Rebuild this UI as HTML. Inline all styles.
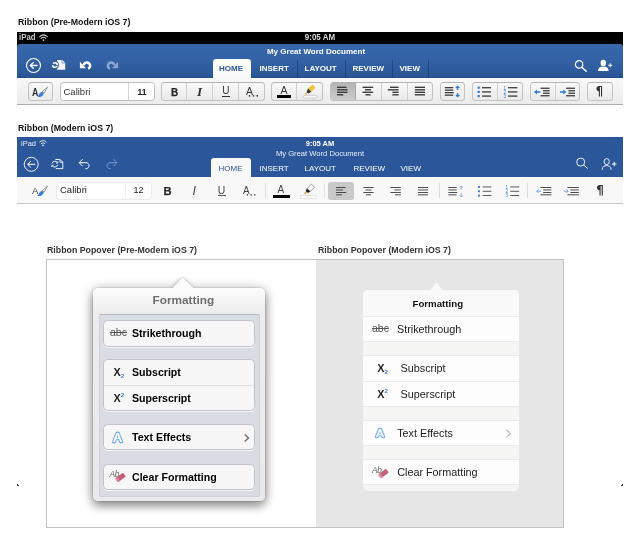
<!DOCTYPE html>
<html><head><meta charset="utf-8"><title>Ribbon</title>
<style>
html,body{margin:0;padding:0;background:#fff;}
body{width:640px;height:547px;position:relative;overflow:hidden;font-family:"Liberation Sans",sans-serif;color:#000;}
.abs{position:absolute;}
.t{position:absolute;white-space:nowrap;line-height:1;will-change:opacity;}
.h{font-weight:bold;font-size:8.8px;color:#111;}
svg{position:absolute;overflow:visible;}
/* ribbon 1 */
#r1status{left:17px;top:32px;width:606px;height:16px;background:#000;}
#r1blue{left:17px;top:44px;width:606px;height:34px;border-radius:3px 3px 0 0;background:linear-gradient(#3667aa,#3262a5 50%,#2a5595 96%,#23498a);}
#r1bar{left:17px;top:78px;width:606px;height:27px;background:linear-gradient(#f9f9f9,#ececec);border-bottom:1px solid #b0b0b0;box-sizing:border-box;}
.tab1{font-weight:bold;font-size:8px;color:#fff;top:64.5px;}
.btn1{position:absolute;top:82px;height:19px;box-sizing:border-box;border:1px solid #c4c4c4;border-top-color:#b4b4b4;border-radius:3.5px;background:linear-gradient(#f9f9f9,#eaeaea);}
.sep1{position:absolute;top:0;width:1px;height:17px;background:#cfcfcf;}
.d1{position:absolute;top:60px;width:1px;height:18px;background:rgba(20,50,110,.55);}
/* ribbon 2 */
#r2blue{left:17px;top:137px;width:606px;height:40px;background:#2b579a;}
#r2bar{left:17px;top:177px;width:606px;height:27px;background:#f8f8f8;border-bottom:1px solid #c8c8c8;box-sizing:border-box;}
.tab2{font-size:8px;color:#fff;top:164.5px;}
.sep2{position:absolute;top:182px;width:1px;height:18px;background:#dcdcdc;}
/* popovers */
#boxL{left:46px;top:259px;width:271px;height:269px;box-sizing:border-box;border:1px solid #c4c4c4;background:#fff;}
#boxR{left:316px;top:259px;width:248px;height:269px;box-sizing:border-box;border:1px solid #c4c4c4;border-left:none;background:#e6e6e6;}

/* popover 1 */
#p1{left:92.6px;top:288px;width:172.6px;height:212.5px;border-radius:5px;background:linear-gradient(#fcfcfc 0,#ececee 26px,#e9e9eb 100%);box-shadow:0 2px 12px rgba(0,0,0,.42),0 6px 10px rgba(0,0,0,.22),0 0 1.5px rgba(0,0,0,.3);z-index:1;}
#p1in{left:98.5px;top:313.6px;width:161.2px;height:183px;box-sizing:border-box;border-radius:2px;background:#d9dce3;border:1px solid #cdd0d6;border-top-color:#b6b9c1;}
.g1{position:absolute;left:103.2px;width:151.6px;box-sizing:border-box;border:1px solid #bfc2c9;border-radius:4.5px;background:#f7f7f7;box-shadow:0 1px 0 rgba(255,255,255,.7);}
.l1{font-weight:bold;font-size:10.6px;color:#000;left:132px;}
/* popover 2 */
#p2{left:362.5px;top:290.4px;width:156.8px;height:201px;border-radius:5px;background:#f5f5f4;overflow:hidden;}
.row2{position:absolute;left:0;width:157px;background:#fdfdfd;border-top:1px solid #eaeaee;border-bottom:1px solid #eaeaee;box-sizing:border-box;}
.l2{font-size:10.8px;color:#222;}
</style></head>
<body>
<div class="t h" style="left:18px;top:17.5px;">Ribbon (Pre-Modern iOS 7)</div>
<div class="abs" id="r1status"></div>
<div class="abs" id="r1blue"></div>
<div class="abs" id="r1bar"></div>


<!-- ribbon 1 content -->
<div class="t" style="left:19px;top:33.4px;font-size:9.3px;font-weight:bold;color:#c9c9c9;transform:scaleX(.85);transform-origin:0 0;">iPad</div>
<svg style="left:39px;top:33.5px;" width="9" height="8" viewBox="0 0 9 8"><g fill="none" stroke="#d0d0d0" stroke-width="1.1" stroke-linecap="round"><path d="M0.7 2.6 Q4.5 -0.9 8.3 2.6"/><path d="M2.2 4.3 Q4.5 2.2 6.8 4.3"/></g><circle cx="4.5" cy="6.1" r="0.9" fill="#d0d0d0"/></svg>
<div class="t" style="left:270px;width:100px;text-align:center;top:33.4px;font-size:9.3px;font-weight:bold;color:#d6d6d6;transform:scaleX(.86);">9:05 AM</div>
<div class="t" style="left:216px;width:200px;text-align:center;top:47.5px;font-size:8px;font-weight:bold;color:#fff;">My Great Word Document</div>
<!-- left icons -->
<svg style="left:25px;top:57px;" width="17" height="17" viewBox="0 0 17 17"><circle cx="8.5" cy="8.5" r="7" fill="none" stroke="#fff" stroke-width="1.1"/><path d="M12 8.5 H6 M8.2 5.8 L5.3 8.5 L8.2 11.2" fill="none" stroke="#fff" stroke-width="1.5" stroke-linejoin="round" stroke-linecap="round"/></svg>
<svg style="left:50px;top:58px;" width="16" height="13" viewBox="0 0 16 13"><path d="M7 2 H12.2 L15.2 5 V11.8 H7 Z" fill="#f4f6fa"/><path d="M12 1.8 V5.2 H15.4" fill="none" stroke="#7f9ccb" stroke-width="0.8"/><circle cx="5" cy="7" r="3.9" fill="#3160a3"/><circle cx="5" cy="7" r="2.35" fill="none" stroke="#fff" stroke-width="1.5" stroke-dasharray="5.9 1.48" stroke-dashoffset="-0.6"/></svg>
<svg style="left:79px;top:60px;" width="14" height="10" viewBox="0 0 14 10"><path d="M0.9 1.7 L0.9 8.3 L7 8.3 Z" fill="#fff"/><path d="M9.2 8.8 A3.3 3.3 0 1 0 4.6 5.2" fill="none" stroke="#fff" stroke-width="2.6"/></svg>
<svg style="left:105px;top:60px;" width="14" height="10" viewBox="0 0 14 10"><g transform="translate(14,0) scale(-1,1)"><path d="M0.9 1.7 L0.9 8.3 L7 8.3 Z" fill="#8ba6d1"/><path d="M9.2 8.8 A3.3 3.3 0 1 0 4.6 5.2" fill="none" stroke="#8ba6d1" stroke-width="2.6"/></g></svg>
<!-- tabs -->
<div class="abs" style="left:212.5px;top:59px;width:38.5px;height:20px;background:linear-gradient(#fff,#f8f8f8);border-radius:3px 3px 0 0;"></div>
<div class="t tab1" style="left:219px;color:#2b579a;">HOME</div>
<div class="t tab1" style="left:259.5px;">INSERT</div>
<div class="t tab1" style="left:304.5px;">LAYOUT</div>
<div class="t tab1" style="left:352.5px;">REVIEW</div>
<div class="t tab1" style="left:399.5px;">VIEW</div>
<div class="d1" style="left:296.5px;"></div><div class="d1" style="left:344.5px;"></div><div class="d1" style="left:392px;"></div><div class="d1" style="left:427.5px;"></div>
<!-- right icons -->
<svg style="left:574px;top:58.5px;" width="14" height="14" viewBox="0 0 14 14"><circle cx="5.1" cy="5.4" r="3.7" fill="none" stroke="#fff" stroke-width="1.2"/><path d="M7.9 8.2 L12.2 12.3" stroke="#fff" stroke-width="1.5" stroke-linecap="round"/></svg>
<svg style="left:597px;top:58.5px;" width="17" height="13" viewBox="0 0 17 13"><ellipse cx="6.3" cy="4" rx="2.7" ry="3.2" fill="#fff"/><path d="M1 12 C1 9 3 7.6 6.3 7.6 C9.6 7.6 11.6 9 11.6 12 Z" fill="#fff"/><path d="M11.2 6.3 H15.2 M13.2 4.3 V8.3" stroke="#fff" stroke-width="1"/></svg>
<!-- toolbar -->
<div class="btn1" style="left:28px;width:25px;"></div>
<div class="t" style="left:32.4px;top:86.5px;font-size:10.5px;font-weight:bold;color:#333;transform:scaleX(.84);transform-origin:0 0;">A</div>
<svg style="left:36.4px;top:85.8px;" width="13" height="12" viewBox="0 0 13 12"><path d="M6.2 5.7 L11.5 1.1 L8.1 7.3 Z" fill="#f2f2f2" stroke="#6a6a6a" stroke-width="0.65" stroke-linejoin="round"/><path d="M1 11 C2.2 10.4 2.6 8.6 3.8 7.2 C5 5.8 6.6 5.6 7.4 6.6 C8.2 7.8 7.2 9.6 5.6 10.4 C4 11.2 2.4 11.2 1 11 Z" fill="#3a80d6"/></svg>
<div class="btn1" style="left:60px;width:94.5px;background:#fff;border-color:#bcbcbc;"><div class="sep1" style="left:67.3px;background:#d4d4d4;"></div></div>
<div class="t" style="left:63.5px;top:86.5px;font-size:9.5px;color:#333;">Calibri</div>
<div class="t" style="left:137.5px;top:87.8px;font-size:8.6px;font-weight:bold;color:#222;">11</div>
<div class="btn1" style="left:161px;width:104px;"><div class="sep1" style="left:24px;"></div><div class="sep1" style="left:50.2px;"></div><div class="sep1" style="left:76.2px;"></div></div>
<div class="t" style="left:170.5px;top:86.5px;font-size:11px;font-weight:bold;color:#2a2a2a;-webkit-text-stroke:0.25px #2a2a2a;transform:scaleX(.9);transform-origin:0 0;">B</div>
<div class="t" style="left:197px;top:84.9px;font-size:13.3px;font-style:italic;font-weight:bold;font-family:'Liberation Serif',serif;color:#333;">I</div>
<div class="t" style="left:222.3px;top:85.9px;font-size:10px;color:#333;">U</div>
<div class="abs" style="left:222px;top:95.6px;width:8px;height:1px;background:#333;"></div>
<div class="t" style="left:246.1px;top:86px;font-size:10.5px;color:#333;">A</div>
<svg style="left:248px;top:95.2px;" width="12" height="2" viewBox="0 0 12 2"><g fill="#333"><rect x="0.8" y="0.1" width="1.5" height="1.5"/><rect x="4.8" y="0.1" width="1.5" height="1.5"/><rect x="8.5" y="0.1" width="1.5" height="1.5"/></g></svg>
<div class="btn1" style="left:271px;width:51.5px;"><div class="sep1" style="left:24px;"></div></div>
<div class="t" style="left:280.5px;top:84.5px;font-size:10.5px;color:#333;">A</div>
<div class="abs" style="left:277px;top:95px;width:13.5px;height:3px;background:#000;"></div>
<svg style="left:303px;top:84px;" width="14" height="15" viewBox="0 0 14 15"><path d="M9.6 1.3 L12 3.5 L8.3 7.6 L5.2 4.6 Z" fill="#eec33c" stroke="#eec33c" stroke-width="1" stroke-linejoin="round"/><path d="M5 4.6 L8.2 7.8 L5.6 9.5 L3.6 8.2 Z" fill="#333"/><circle cx="2.9" cy="9.8" r="1.05" fill="#e6b730"/><rect x="0.5" y="11.4" width="13.2" height="2.8" rx="0.8" fill="#f6f6f6" stroke="#c6c6c6" stroke-width="0.8"/></svg>
<div class="btn1" style="left:329.5px;width:103px;"><div class="abs" style="left:0;top:0;width:25px;height:17px;border-radius:2px 0 0 2px;background:linear-gradient(#b5b5b5,#cbcbcb);"></div><div class="sep1" style="left:24.5px;background:#a9a9a9"></div><div class="sep1" style="left:50.5px;"></div><div class="sep1" style="left:76px;"></div></div>
<svg style="left:337px;top:86px;" width="100" height="11" viewBox="0 0 100 11"><g fill="#3c3c3c"><rect x="0" y="0.6" width="9.5" height="1.4"/><rect x="0" y="3.1" width="10.5" height="1.4"/><rect x="0" y="5.6" width="10.5" height="1.4"/><rect x="0" y="8.1" width="6.3" height="1.4"/>
<rect x="25.6" y="0.6" width="10.6" height="1.4"/><rect x="28" y="3.1" width="6" height="1.4"/><rect x="25.6" y="5.6" width="10.6" height="1.4"/><rect x="28.4" y="8.1" width="5.2" height="1.4"/>
<rect x="53" y="0.6" width="8.6" height="1.4"/><rect x="50.8" y="3.1" width="10.8" height="1.4"/><rect x="55.4" y="5.6" width="6.2" height="1.4"/><rect x="55.4" y="8.1" width="6.2" height="1.4"/>
<rect x="77.8" y="0.6" width="10.2" height="1.4"/><rect x="77.8" y="3.1" width="10.2" height="1.4"/><rect x="77.8" y="5.6" width="10.2" height="1.4"/><rect x="77.8" y="8.1" width="10.2" height="1.4"/></g></svg>
<div class="btn1" style="left:439.5px;width:25px;"></div>
<svg style="left:444px;top:85px;" width="17" height="13" viewBox="0 0 17 13"><g fill="#3c3c3c"><rect x="0.8" y="2" width="8.4" height="1.3"/><rect x="0.8" y="4.5" width="8.4" height="1.3"/><rect x="0.8" y="7" width="9" height="1.3"/><rect x="0.8" y="9.5" width="8.4" height="1.3"/></g><g fill="#2f7bd3"><path d="M13.6 0.4 L16 3 H14.4 V4.8 H12.8 V3 H11.2 Z"/><path d="M13.6 12.6 L16 10 H14.4 V8.2 H12.8 V10 H11.2 Z"/></g></svg>
<div class="btn1" style="left:471.5px;width:51px;"><div class="sep1" style="left:24px;"></div></div>
<svg style="left:477px;top:86px;" width="42" height="12" viewBox="0 0 42 12"><g fill="#2f7bd3"><rect x="0.6" y="0.6" width="2.2" height="2.2" rx="0.5"/><rect x="0.6" y="4.8" width="2.2" height="2.2" rx="0.5"/><rect x="0.6" y="9" width="2.2" height="2.2" rx="0.5"/></g><g fill="#4a4a4a"><rect x="5" y="1" width="9" height="1.4"/><rect x="5" y="5.2" width="9" height="1.4"/><rect x="5" y="9.4" width="9" height="1.4"/><rect x="31" y="1" width="9.4" height="1.4"/><rect x="31" y="5.2" width="9.4" height="1.4"/><rect x="31" y="9.4" width="9.4" height="1.4"/></g><g fill="#2f7bd3" font-family="Liberation Sans, sans-serif" font-size="4.6"><text x="26.4" y="3.6">1</text><text x="26.4" y="7.8">2</text><text x="26.4" y="12">3</text></g></svg>
<div class="btn1" style="left:529.5px;width:50.5px;"><div class="sep1" style="left:24px;"></div></div>
<svg style="left:533px;top:87.3px;" width="44" height="12" viewBox="0 0 44 12"><g fill="#3c3c3c"><rect x="7.6" y="0.6" width="9" height="1.3"/><rect x="10" y="3.1" width="6.6" height="1.3"/><rect x="10" y="5.6" width="6.6" height="1.3"/><rect x="7.6" y="8.1" width="9" height="1.3"/>
<rect x="33" y="0.6" width="9" height="1.3"/><rect x="35.4" y="3.1" width="6.6" height="1.3"/><rect x="35.4" y="5.6" width="6.6" height="1.3"/><rect x="33" y="8.1" width="9" height="1.3"/></g><g fill="#2f7bd3"><path d="M1 5 L4 2.4 V4.2 H7.4 V5.8 H4 V7.6 Z"/><path d="M33.4 5 L30.4 2.4 V4.2 H27 V5.8 H30.4 V7.6 Z"/></g></svg>
<div class="btn1" style="left:587px;width:25.5px;"></div>
<div class="t" style="left:595.8px;top:85.6px;font-size:11.5px;font-weight:bold;color:#333;font-family:'DejaVu Sans',sans-serif;">¶</div>

<div class="t h" style="left:18px;top:123.5px;">Ribbon (Modern iOS 7)</div>
<div class="abs" id="r2blue"></div>
<div class="abs" id="r2bar"></div>


<!-- ribbon 2 content -->
<div class="t" style="left:21px;top:139.8px;font-size:7.5px;color:#e8eef7;">iPad</div>
<svg style="left:38.5px;top:140px;" width="8" height="7" viewBox="0 0 8 7"><g fill="none" stroke="#e8eef7" stroke-width="0.9"><path d="M0.5 2.2 Q4 -0.9 7.5 2.2"/><path d="M1.9 3.7 Q4 1.9 6.1 3.7"/></g><path d="M4 6.4 L2.9 5 Q4 4.1 5.1 5 Z" fill="#e8eef7"/></svg>
<div class="t" style="left:270px;width:100px;text-align:center;top:140px;font-size:7.5px;font-weight:bold;color:#fff;">9:05 AM</div>
<div class="t" style="left:220px;width:200px;text-align:center;top:149.5px;font-size:7.6px;color:#e9eef6;">My Great Word Document</div>
<svg style="left:23px;top:156px;" width="17" height="17" viewBox="0 0 17 17"><circle cx="8.2" cy="8.3" r="7" fill="none" stroke="#fff" stroke-width="0.9"/><path d="M12.2 8.3 H4.8 M7.8 5.2 L4.6 8.3 L7.8 11.4" fill="none" stroke="#fff" stroke-width="1"/></svg>
<svg style="left:50px;top:158px;" width="14" height="12" viewBox="0 0 14 12"><path d="M5.4 1.5 H10 L12.8 4.3 V10.6 H5.8" fill="none" stroke="#fff" stroke-width="0.9"/><path d="M10 1.5 V4.3 H12.8" fill="none" stroke="#fff" stroke-width="0.8"/><path d="M7.4 4.6 A3 3 0 0 0 2 5.4 M2.2 7.6 A3 3 0 0 0 7.6 6.8" fill="none" stroke="#fff" stroke-width="0.9"/><path d="M7.8 3.2 V5 H6" fill="none" stroke="#fff" stroke-width="0.8"/><path d="M1.8 9 V7.2 H3.6" fill="none" stroke="#fff" stroke-width="0.8"/></svg>
<svg style="left:78px;top:158px;" width="13" height="12" viewBox="0 0 13 12"><path d="M4.6 1.2 L1.2 4.7 L4.6 8.2 M1.2 4.7 H8 C12 4.7 12.4 10.6 7.4 10.8" fill="none" stroke="#fff" stroke-width="0.95"/></svg>
<svg style="left:105px;top:158px;" width="13" height="12" viewBox="0 0 13 12"><g transform="translate(13,0) scale(-1,1)"><path d="M4.6 1.2 L1.2 4.7 L4.6 8.2 M1.2 4.7 H8 C12 4.7 12.4 10.6 7.4 10.8" fill="none" stroke="#7d9bcb" stroke-width="0.95"/></g></svg>
<div class="abs" style="left:211px;top:158px;width:40px;height:20px;background:#f8f8f8;border-radius:3px 3px 0 0;"></div>
<div class="t tab2" style="left:218.5px;color:#2b579a;">HOME</div>
<div class="t tab2" style="left:259.5px;">INSERT</div>
<div class="t tab2" style="left:304.5px;">LAYOUT</div>
<div class="t tab2" style="left:353.5px;">REVIEW</div>
<div class="t tab2" style="left:400.5px;">VIEW</div>
<svg style="left:575px;top:156.4px;" width="14" height="14" viewBox="0 0 14 14"><circle cx="5.7" cy="6.1" r="4" fill="none" stroke="#fff" stroke-width="0.9"/><path d="M8.6 9 L12.8 12.6" stroke="#fff" stroke-width="0.9"/></svg>
<svg style="left:601px;top:157px;" width="17" height="14" viewBox="0 0 17 14"><ellipse cx="5.7" cy="4.6" rx="2.6" ry="3" fill="none" stroke="#fff" stroke-width="0.9"/><path d="M1.3 12.8 C1.3 9.6 3.2 8.6 5.7 8.6 C8.2 8.6 10.1 9.6 10.1 12.8" fill="none" stroke="#fff" stroke-width="0.9"/><path d="M11 7 H15.4 M13.2 4.8 V9.2" stroke="#fff" stroke-width="1"/></svg>
<!-- toolbar 2 -->
<div class="t" style="left:32px;top:185.5px;font-size:9.5px;color:#444;">A</div>
<svg style="left:35.7px;top:184.7px;" width="13" height="12" viewBox="0 0 13 12"><path d="M6.2 5.7 L11.5 1.1 L8.1 7.3 Z" fill="#f2f2f2" stroke="#6a6a6a" stroke-width="0.65" stroke-linejoin="round"/><path d="M1 11 C2.2 10.4 2.6 8.6 3.8 7.2 C5 5.8 6.6 5.6 7.4 6.6 C8.2 7.8 7.2 9.6 5.6 10.4 C4 11.2 2.4 11.2 1 11 Z" fill="#3a80d6"/></svg>
<div class="abs" style="left:55.5px;top:181.5px;width:96px;height:18px;box-sizing:border-box;border:1px solid #ececec;border-radius:3px;background:#fff;"></div>
<div class="abs" style="left:124.5px;top:183px;width:1px;height:15px;background:#f0f0f0;"></div>
<div class="t" style="left:60px;top:185px;font-size:9.5px;color:#222;">Calibri</div>
<div class="t" style="left:133.5px;top:185.5px;font-size:9px;color:#222;">12</div>
<div class="t" style="left:163.4px;top:185.6px;font-size:11.2px;font-weight:bold;color:#2a2a2a;-webkit-text-stroke:0.25px #2a2a2a;">B</div>
<div class="t" style="left:192.6px;top:184.9px;font-size:12.5px;font-style:italic;color:#444;">I</div>
<div class="t" style="left:217.8px;top:186.3px;font-size:10.4px;color:#444;">U</div>
<div class="abs" style="left:217.6px;top:194.8px;width:8.2px;height:1px;background:#555;"></div>
<div class="t" style="left:243.2px;top:185.3px;font-size:11.3px;color:#444;transform:scaleX(.88);transform-origin:0 0;">A</div>
<svg style="left:246px;top:194px;" width="13" height="2" viewBox="0 0 13 2"><g fill="#3a3a3a"><rect x="0.75" y="0.15" width="1.3" height="1.4"/><rect x="4.45" y="0.15" width="1.3" height="1.4"/><rect x="8.15" y="0.15" width="1.3" height="1.4"/></g></svg>
<div class="sep2" style="left:265px;top:183px;height:15px;"></div>
<div class="t" style="left:277.5px;top:184.5px;font-size:10px;color:#444;">A</div>
<div class="abs" style="left:273px;top:195px;width:17px;height:3px;background:#000;"></div>
<svg style="left:300px;top:183px;" width="18" height="16" viewBox="0 0 18 16"><path d="M11.5 1.2 L14.5 4.2 L10.4 8.3 L7 5.6 Z" fill="#fff" stroke="#6a6a6a" stroke-width="0.7" stroke-linejoin="round"/><path d="M6.8 5.5 L10.3 8.4 L8.4 9.8 L6.2 9.2 L5.9 7.6 Z" fill="#222"/><path d="M4 10.8 L5.6 8.8 L6.6 10 Z" fill="#f0a23c" stroke="#f0a23c" stroke-width="0.6" stroke-linejoin="round"/><rect x="0.6" y="12.4" width="16" height="2.8" fill="#fdfdfd" stroke="#dadada" stroke-width="0.7"/></svg>
<div class="sep2" style="left:324px;top:183px;height:15px;background:#e6e6e6"></div>
<div class="abs" style="left:328px;top:181.5px;width:26px;height:18.5px;border-radius:3px;background:#c9c9c9;"></div>
<svg style="left:336px;top:186px;" width="100" height="11" viewBox="0 0 100 11"><g fill="#3a3a3a"><rect x="0" y="1" width="9.6" height="0.9"/><rect x="0" y="3.5" width="7" height="0.9"/><rect x="0" y="6" width="10.2" height="0.9"/><rect x="0" y="8.4" width="6" height="0.9"/>
<rect x="27.4" y="1" width="10.2" height="0.9"/><rect x="29.4" y="3.5" width="6.2" height="0.9"/><rect x="27.4" y="6" width="10.2" height="0.9"/><rect x="30" y="8.4" width="5" height="0.9"/>
<rect x="54.4" y="1" width="10.4" height="0.9"/><rect x="58.4" y="3.5" width="6.4" height="0.9"/><rect x="54.4" y="6" width="10.4" height="0.9"/><rect x="59" y="8.4" width="5.8" height="0.9"/>
<rect x="82" y="1" width="10" height="0.9"/><rect x="82" y="3.5" width="10" height="0.9"/><rect x="82" y="6" width="10" height="0.9"/><rect x="82" y="8.4" width="10" height="0.9"/></g></svg>
<div class="sep2" style="left:439px;top:183px;height:15px;"></div>
<svg style="left:448px;top:185px;" width="17" height="13" viewBox="0 0 17 13"><g fill="#3a3a3a"><rect x="0.4" y="2" width="8.2" height="0.9"/><rect x="0.4" y="4.5" width="8.2" height="0.9"/><rect x="0.4" y="7" width="8.8" height="0.9"/><rect x="0.4" y="9.4" width="8.2" height="0.9"/></g><g fill="none" stroke="#7aa5de" stroke-width="0.8"><path d="M13.2 5 V1 M11.4 2.8 L13.2 1 L15 2.8"/><path d="M13.2 8 V12 M11.4 10.2 L13.2 12 L15 10.2"/></g></svg>
<svg style="left:477px;top:185px;" width="44" height="12" viewBox="0 0 44 12"><g fill="#2f7bd3"><rect x="1" y="1" width="1.9" height="1.9"/><rect x="1" y="5.3" width="1.9" height="1.9"/><rect x="1" y="9.6" width="1.9" height="1.9"/></g><g fill="#4a4a4a"><rect x="5.6" y="1.5" width="8.8" height="0.9"/><rect x="5.6" y="5.8" width="8.8" height="0.9"/><rect x="5.6" y="10.1" width="8.8" height="0.9"/><rect x="33.2" y="1.5" width="9" height="0.9"/><rect x="33.2" y="5.8" width="9" height="0.9"/><rect x="33.2" y="10.1" width="9" height="0.9"/></g><g fill="#4a8ade" font-family="Liberation Sans, sans-serif" font-size="4.6"><text x="28.4" y="3.8">1</text><text x="28.4" y="8">2</text><text x="28.4" y="12.2">3</text></g></svg>
<div class="sep2" style="left:527px;top:183px;height:15px;"></div>
<svg style="left:536px;top:186px;" width="44" height="11" viewBox="0 0 44 11"><g fill="#3a3a3a"><rect x="4.4" y="1" width="11" height="0.9"/><rect x="7.2" y="3.5" width="8.2" height="0.9"/><rect x="7.2" y="6" width="8.2" height="0.9"/><rect x="4.4" y="8.4" width="11" height="0.9"/>
<rect x="31.4" y="1" width="11.4" height="0.9"/><rect x="34.4" y="3.5" width="8.4" height="0.9"/><rect x="34.4" y="6" width="8.4" height="0.9"/><rect x="31.4" y="8.4" width="11.4" height="0.9"/></g><g fill="none" stroke="#5b93df" stroke-width="0.8"><path d="M0.8 5.2 H5.2 M2.6 3.4 L0.8 5.2 L2.6 7"/><path d="M32.2 5.2 H27.8 M30.4 3.4 L32.2 5.2 L30.4 7"/></g></svg>
<div class="t" style="left:596.3px;top:184.3px;font-size:12px;font-weight:bold;color:#333;font-family:'DejaVu Sans',sans-serif;">¶</div>

<div class="t h" style="left:47px;top:246px;font-size:8.8px;color:#333;">Ribbon Popover (Pre-Modern iOS 7)</div>
<div class="t h" style="left:318px;top:246px;font-size:8.8px;color:#333;">Ribbon Popover (Modern iOS 7)</div>
<div class="abs" id="boxL"></div>
<div class="abs" id="boxR"></div>

<!-- popover 1 -->
<svg style="left:170px;top:276px;z-index:0;" width="26" height="13" viewBox="0 0 26 13"><defs><filter id="sh" x="-50%" y="-50%" width="200%" height="200%"><feGaussianBlur stdDeviation="2.2"/></filter></defs><path d="M2.5 12 L12.5 2 L22.5 12 Z" fill="rgba(0,0,0,.35)" filter="url(#sh)"/></svg>
<div class="abs" id="p1"></div>
<svg style="left:170px;top:276px;z-index:2;" width="26" height="13" viewBox="0 0 26 13"><path d="M2.5 12.2 L12.5 1.8 L23.5 12.2 Z" fill="#fcfcfc"/></svg>
<div style="position:absolute;left:0;top:0;z-index:3;">
<div class="t" style="left:152.5px;top:295px;font-size:11.8px;font-weight:bold;color:#6e6e6e;">Formatting</div>
<div class="abs" id="p1in"></div>
<div class="g1" style="top:320px;height:26.5px;"></div>
<div class="g1" style="top:359.2px;height:52.2px;"><div class="abs" style="left:0;top:25px;width:150px;height:1px;background:#dcdcdc;"></div></div>
<div class="g1" style="top:424.3px;height:26px;"></div>
<div class="g1" style="top:463.5px;height:26px;"></div>
<div class="t" style="left:110px;top:326.5px;font-size:10.5px;color:#555;text-decoration:line-through;">abc</div>
<div class="t l1" style="top:328px;">Strikethrough</div>
<div class="t" style="left:113.4px;top:367px;font-size:10.8px;font-weight:bold;color:#222;">X</div>
<div class="t" style="left:120.8px;top:373px;font-size:6.2px;font-weight:bold;color:#3a86e0;">2</div>
<div class="t l1" style="top:367.2px;">Subscript</div>
<div class="t" style="left:113.4px;top:393px;font-size:10.8px;font-weight:bold;color:#222;">X</div>
<div class="t" style="left:120.8px;top:392.4px;font-size:6.2px;font-weight:bold;color:#3a86e0;">2</div>
<div class="t l1" style="top:393.2px;">Superscript</div>
<svg style="left:110px;top:430px;" width="15" height="15" viewBox="0 0 15 15"><text x="7.4" y="12" text-anchor="middle" font-family="Liberation Sans, sans-serif" font-size="12.5" fill="#d4e5fa" stroke="#d4e5fa" stroke-width="3.4" stroke-linejoin="round">A</text><text x="7.4" y="12" text-anchor="middle" font-family="Liberation Sans, sans-serif" font-size="12.5" fill="#4a8fe4" stroke="#4a8fe4" stroke-width="2.3" stroke-linejoin="round">A</text><text x="7.4" y="12" text-anchor="middle" font-family="Liberation Sans, sans-serif" font-size="12.5" fill="#fff" stroke="#fff" stroke-width="0.7" stroke-linejoin="round">A</text></svg>
<div class="t l1" style="top:432px;">Text Effects</div>
<svg style="left:243px;top:432.5px;" width="8" height="10" viewBox="0 0 8 10"><path d="M1.7 1.5 L5.5 5 L1.7 8.5" fill="none" stroke="#6e6e6e" stroke-width="1.4"/></svg>
<div class="t" style="left:109.5px;top:470.4px;font-size:8.4px;font-style:italic;color:#666;letter-spacing:-0.4px;">Ab</div>
<svg style="left:115px;top:472px;" width="11" height="11" viewBox="0 0 11 11"><g transform="rotate(-38 5.5 5.5)"><rect x="0.6" y="3.1" width="9.8" height="4.8" rx="0.9" fill="#c65f78"/><rect x="0.6" y="3.1" width="2.6" height="4.8" rx="0.9" fill="#d98aa0"/></g></svg>
<div class="t l1" style="top:471.6px;">Clear Formatting</div>
</div>

<!-- popover 2 -->
<svg style="left:424px;top:281px;" width="26" height="11" viewBox="0 0 26 11"><path d="M2 10 C6.5 10 8.5 6.5 10.6 3.2 C11.6 1.4 13.2 1.4 14.2 3.2 C16.3 6.5 18.3 10 23 10 Z" fill="#f9f9f9"/></svg>
<div class="abs" id="p2">
<div class="abs" style="left:0;top:0;width:157px;height:26px;background:#f9f9f9;"></div>
<div class="row2" style="top:25.5px;height:26.5px;"></div>
<div class="row2" style="top:64.5px;height:52.5px;"><div class="abs" style="left:0;top:25.5px;width:157px;height:1px;background:#ebebef;"></div></div>
<div class="row2" style="top:129.5px;height:26.5px;"></div>
<div class="row2" style="top:168.5px;height:26.5px;"></div>
</div>
<div class="t" style="left:412.5px;top:299px;font-size:9.7px;font-weight:bold;color:#111;">Formatting</div>
<div class="t" style="left:372px;top:322.5px;font-size:10.5px;color:#555;text-decoration:line-through;">abc</div>
<div class="t l2" style="left:397px;top:323.6px;">Strikethrough</div>
<div class="t" style="left:377.2px;top:362.6px;font-size:10.8px;font-weight:bold;color:#222;">X</div>
<div class="t" style="left:384.4px;top:368.6px;font-size:6.2px;font-weight:bold;color:#3a86e0;">2</div>
<div class="t l2" style="left:400.6px;top:362.6px;">Subscript</div>
<div class="t" style="left:377.2px;top:388.8px;font-size:10.8px;font-weight:bold;color:#222;">X</div>
<div class="t" style="left:384.4px;top:388.2px;font-size:6.2px;font-weight:bold;color:#3a86e0;">2</div>
<div class="t l2" style="left:400.6px;top:388.8px;">Superscript</div>
<svg style="left:373px;top:426px;" width="13.8" height="13.8" viewBox="0 0 15 15"><text x="7.4" y="12" text-anchor="middle" font-family="Liberation Sans, sans-serif" font-size="12.5" fill="#d4e5fa" stroke="#d4e5fa" stroke-width="3.4" stroke-linejoin="round">A</text><text x="7.4" y="12" text-anchor="middle" font-family="Liberation Sans, sans-serif" font-size="12.5" fill="#4a8fe4" stroke="#4a8fe4" stroke-width="2.3" stroke-linejoin="round">A</text><text x="7.4" y="12" text-anchor="middle" font-family="Liberation Sans, sans-serif" font-size="12.5" fill="#fff" stroke="#fff" stroke-width="0.7" stroke-linejoin="round">A</text></svg>
<div class="t l2" style="left:397.2px;top:427.6px;">Text Effects</div>
<svg style="left:504.5px;top:428.5px;" width="8" height="10" viewBox="0 0 8 10"><path d="M1.4 1 L5.4 4.6 L1.4 8.2" fill="none" stroke="#c4c4c8" stroke-width="1.3"/></svg>
<div class="t" style="left:372px;top:466px;font-size:8.4px;font-style:italic;color:#666;letter-spacing:-0.4px;">Ab</div>
<svg style="left:377.5px;top:467.6px;" width="11" height="11" viewBox="0 0 11 11"><g transform="rotate(-38 5.5 5.5)"><rect x="0.6" y="3.1" width="9.8" height="4.8" rx="0.9" fill="#c65f78"/><rect x="0.6" y="3.1" width="2.6" height="4.8" rx="0.9" fill="#d98aa0"/></g></svg>
<div class="t l2" style="left:397.2px;top:467px;">Clear Formatting</div>
<!-- tiny marks -->
<div class="abs" style="left:17px;top:484px;width:1px;height:2px;background:#444;"></div><div class="abs" style="left:17px;top:485px;width:2px;height:1px;background:#444;"></div>
<div class="abs" style="left:622px;top:484px;width:1px;height:2px;background:#444;"></div><div class="abs" style="left:621px;top:485px;width:2px;height:1px;background:#444;"></div>
</body></html>
